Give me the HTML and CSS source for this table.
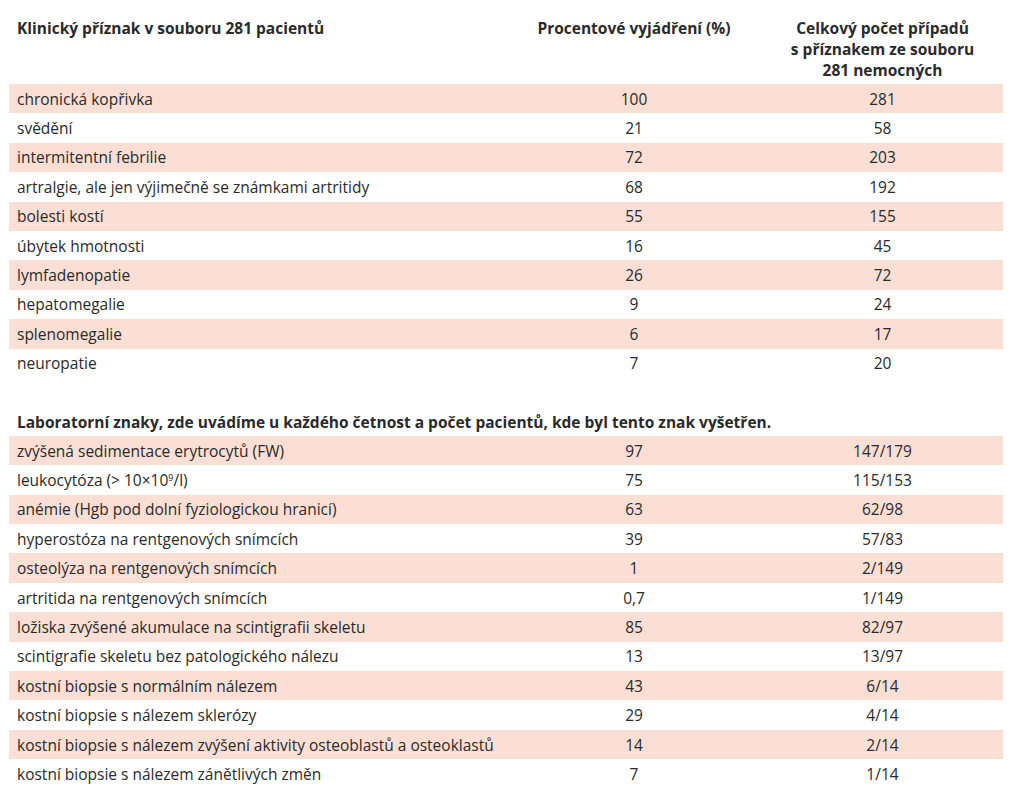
FILE: index.html
```html
<!DOCTYPE html>
<html lang="cs">
<head>
    <meta charset="UTF-8">
    <title>Klinické a laboratorní znaky</title>
    <link rel="stylesheet" href="styles.css">
</head>
<body>
    <table class="data-table">
        <colgroup>
            <col class="col-name">
            <col class="col-pct">
            <col class="col-count">
        </colgroup>
        <thead>
            <tr class="head-row">
                <th class="name">Klinický příznak v souboru 281 pacientů</th>
                <th>Procentové vyjádření (%)</th>
                <th>Celkový počet případů<br>s příznakem ze souboru<br>281 nemocných</th>
            </tr>
        </thead>
        <tbody>
            <tr class="shaded"><td class="name">chronická kopřivka</td><td>100</td><td>281</td></tr>
            <tr><td class="name">svědění</td><td>21</td><td>58</td></tr>
            <tr class="shaded"><td class="name">intermitentní febrilie</td><td>72</td><td>203</td></tr>
            <tr><td class="name">artralgie, ale jen výjimečně se známkami artritidy</td><td>68</td><td>192</td></tr>
            <tr class="shaded"><td class="name">bolesti kostí</td><td>55</td><td>155</td></tr>
            <tr><td class="name">úbytek hmotnosti</td><td>16</td><td>45</td></tr>
            <tr class="shaded"><td class="name">lymfadenopatie</td><td>26</td><td>72</td></tr>
            <tr><td class="name">hepatomegalie</td><td>9</td><td>24</td></tr>
            <tr class="shaded"><td class="name">splenomegalie</td><td>6</td><td>17</td></tr>
            <tr><td class="name">neuropatie</td><td>7</td><td>20</td></tr>

            <tr class="section-row">
                <th class="name" colspan="3">Laboratorní znaky, zde uvádíme u každého četnost a počet pacientů, kde byl tento znak vyšetřen.</th>
            </tr>

            <tr class="shaded"><td class="name">zvýšená sedimentace erytrocytů (FW)</td><td>97</td><td>147/179</td></tr>
            <tr><td class="name">leukocytóza (&gt; 10×10<sup>9</sup>/l)</td><td>75</td><td>115/153</td></tr>
            <tr class="shaded"><td class="name">anémie (Hgb pod dolní fyziologickou hranicí)</td><td>63</td><td>62/98</td></tr>
            <tr><td class="name">hyperostóza na rentgenových snímcích</td><td>39</td><td>57/83</td></tr>
            <tr class="shaded"><td class="name">osteolýza na rentgenových snímcích</td><td>1</td><td>2/149</td></tr>
            <tr><td class="name">artritida na rentgenových snímcích</td><td>0,7</td><td>1/149</td></tr>
            <tr class="shaded"><td class="name">ložiska zvýšené akumulace na scintigrafii skeletu</td><td>85</td><td>82/97</td></tr>
            <tr><td class="name">scintigrafie skeletu bez patologického nálezu</td><td>13</td><td>13/97</td></tr>
            <tr class="shaded"><td class="name">kostní biopsie s normálním nálezem</td><td>43</td><td>6/14</td></tr>
            <tr><td class="name">kostní biopsie s nálezem sklerózy</td><td>29</td><td>4/14</td></tr>
            <tr class="shaded"><td class="name">kostní biopsie s nálezem zvýšení aktivity osteoblastů a osteoklastů</td><td>14</td><td>2/14</td></tr>
            <tr><td class="name">kostní biopsie s nálezem zánětlivých změn</td><td>7</td><td>1/14</td></tr>
        </tbody>
    </table>
</body>
</html>
```

FILE: styles.css
```css
html, body {
    margin: 0;
    padding: 0;
    background-color: #ffffff;
    color: #2a2a2a;
    font-family: "Open Sans", "Liberation Sans", sans-serif;
    font-size: 15.5px;
}

.data-table {
    margin-left: 9px;
    width: 994px;
    border-collapse: collapse;
    table-layout: fixed;
}

.col-name {
    width: 497px;
}

.col-pct {
    width: 256px;
}

.col-count {
    width: 241px;
}

th, td {
    padding: 0 8px;
    text-align: center;
}

th {
    font-weight: bold;
}

.name {
    text-align: left;
}

.head-row th {
    vertical-align: top;
    line-height: 21px;
    padding-top: 18px;
    padding-bottom: 3px;
}

td {
    height: 29.4px;
    line-height: 20px;
    vertical-align: middle;
}

.shaded td {
    background-color: #fbdfd5;
}

.section-row th {
    height: 58px;
    vertical-align: bottom;
    line-height: 20px;
    padding-bottom: 4px;
    box-sizing: border-box;
}

sup {
    font-size: 9px;
    line-height: 0;
    vertical-align: 5px;
}
```
